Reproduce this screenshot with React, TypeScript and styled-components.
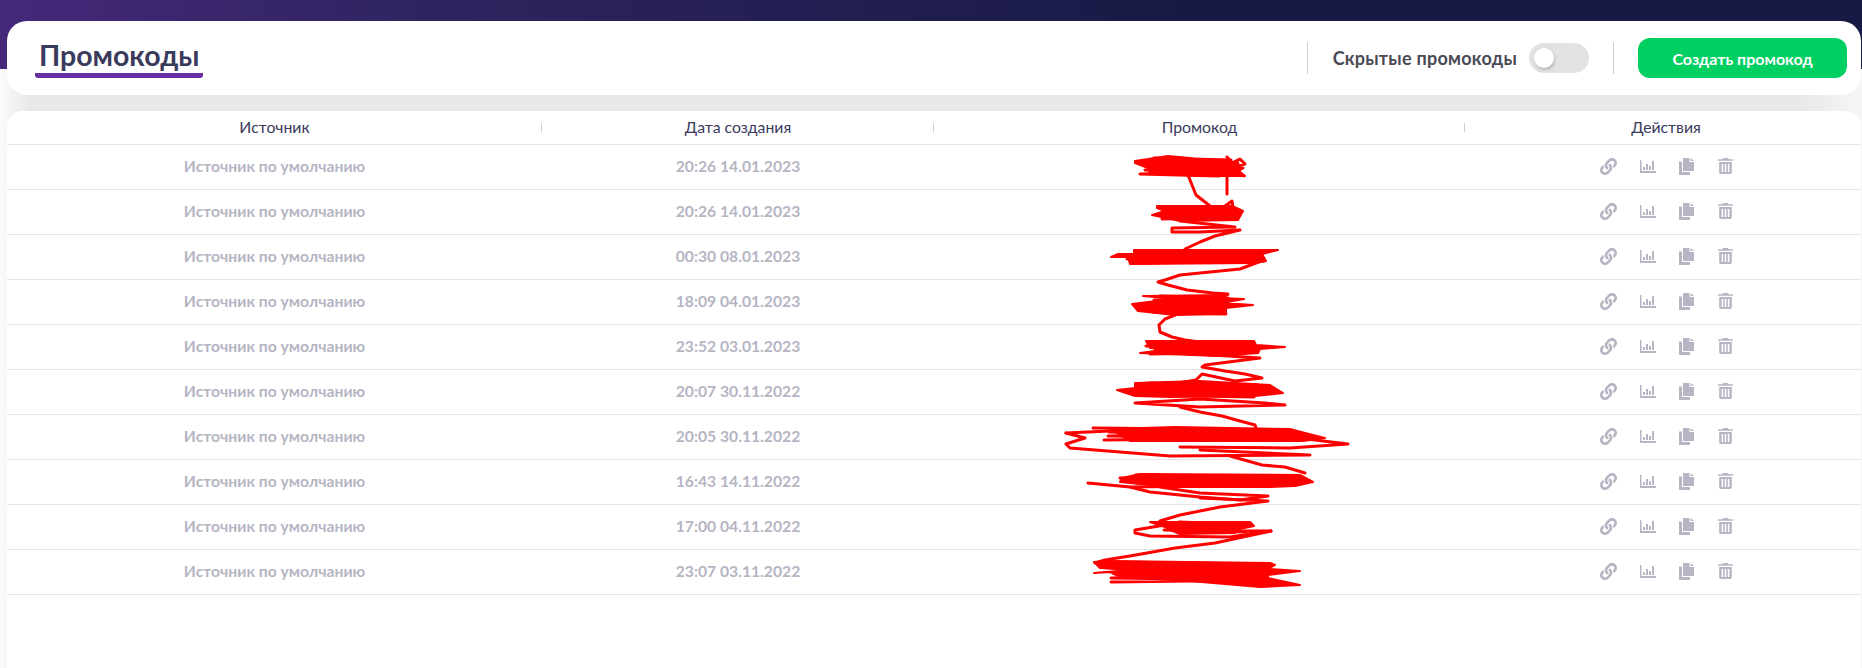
import React, { useState } from 'react';
import styled, { createGlobalStyle } from 'styled-components';
import { FaLink } from 'react-icons/fa';

const FONT = `Lato, 'Noto Sans', sans-serif`;

const GlobalStyle = createGlobalStyle`
  html, body { margin: 0; padding: 0; height: 100%; overflow: hidden; }
  * { box-sizing: border-box; }
`;

const Page = styled.div`
  position: relative;
  height: 668px;
  padding: 21px 1px 0 7px;
  overflow: hidden;
  font-family: ${FONT};
  background:
    linear-gradient(90deg, #45287a 0, #2f2460 420px, #171a44 1200px) 0 0 / 100% 69px no-repeat,
    linear-gradient(90deg, #fbfbfb 0, #e8e8e8 30px, #e8e8e8 1800px, #f6f6f6 100%);
`;

const Panel = styled.header`
  display: flex;
  align-items: center;
  height: 74px;
  padding: 0 14px 0 28px;
  background: #fff;
  border-radius: 20px;
`;

const Title = styled.h1`
  display: flex;
  flex: 1;
  margin: 0;
`;

const TitleText = styled.span`
  padding: 0 4px 2px 4px;
  border-bottom: 5px solid #6a2ea3;
  border-radius: 3px;
  font-size: 28.5px;
  line-height: 32px;
  font-weight: 700;
  color: #3a3a5c;
`;

const Separator = styled.span`
  width: 1px;
  height: 32px;
  background: #cfcfcf;
`;

const HiddenGroup = styled.div`
  display: flex;
  align-items: center;
  gap: 12px;
  padding: 0 24px 0 25px;
  font-size: 18px;
  letter-spacing: 0.25px;
  font-weight: 700;
  color: #4a4a56;
`;

const Toggle = styled.button<{ $on: boolean }>`
  position: relative;
  width: 60px;
  height: 30px;
  padding: 0;
  border: 0;
  border-radius: 15px;
  background: #e2e2e2;
  cursor: pointer;

  &::after {
    content: '';
    position: absolute;
    top: 5px;
    left: ${p => (p.$on ? '35px' : '5px')};
    width: 20px;
    height: 20px;
    border-radius: 50%;
    background: #fff;
    box-shadow: 1px 2px 3px rgba(0, 0, 0, 0.2);
  }
`;

const CreateButton = styled.button`
  width: 209px;
  height: 40px;
  margin-left: 24px;
  border: 0;
  border-radius: 12px;
  background: #00cf62;
  color: #fff;
  font-family: ${FONT};
  font-size: 16px;
  font-weight: 700;
  cursor: pointer;
`;

const TableCard = styled.section`
  margin-top: 16px;
  height: 600px;
  background: #fff;
  border-radius: 16px 16px 0 0;
`;

const columns = '535px 392px 531px 1fr';

const HeadRow = styled.div`
  display: grid;
  grid-template-columns: ${columns};
  height: 34px;
  border-bottom: 1px solid #e4e4e4;
`;

const HeadCell = styled.div<{ $divider?: boolean; $shift?: number }>`
  position: relative;
  display: flex;
  align-items: center;
  justify-content: center;
  padding: 0 0 3px ${p => p.$shift ?? 0}px;
  font-size: 15.8px;
  color: #3a3a5c;

  ${p => p.$divider && `
    &::after {
      content: '';
      position: absolute;
      right: 0;
      top: 12px;
      width: 1px;
      height: 9px;
      background: #cfcfcf;
    }
  `}
`;

const Row = styled.div`
  display: grid;
  grid-template-columns: ${columns};
  height: 45px;
  border-bottom: 1px solid #e4e4e4;
`;

const Cell = styled.div`
  display: flex;
  align-items: center;
  justify-content: center;
  padding-bottom: 3px;
  font-size: 15.7px;
  font-weight: 700;
  color: #b5b5c3;
`;

const Actions = styled.div`
  display: flex;
  align-items: center;
  justify-content: center;
  gap: 15px;
  padding: 0 0 2px 8px;
`;

const ActionIcon = styled.span`
  display: flex;
  align-items: center;
  justify-content: center;
  width: 24px;
  height: 24px;
  color: #b5b5c3;
`;

const Scribble = styled.svg`
  position: absolute;
  left: 0;
  top: 0;
  pointer-events: none;
`;

const dates = [
  '20:26 14.01.2023',
  '20:26 14.01.2023',
  '00:30 08.01.2023',
  '18:09 04.01.2023',
  '23:52 03.01.2023',
  '20:07 30.11.2022',
  '20:05 30.11.2022',
  '16:43 14.11.2022',
  '17:00 04.11.2022',
  '23:07 03.11.2022',
];

const blobs = [
  '1135,161 1168,156 1190,158 1205,161 1238,162 1240,172 1245,176 1200,176 1150,173 1148,168 1135,163',
  '1157,206 1210,206 1232,206 1243,211 1238,220 1180,221 1152,215 1165,211 1157,208',
  '1134,250 1278,250 1262,254 1266,261 1255,263 1130,264 1128,257 1111,257 1118,254 1134,254',
  '1143,296 1228,295 1220,298 1244,299 1222,303 1253,305 1226,308 1226,314 1175,315 1138,311 1132,304 1165,300 1165,298',
  '1146,341 1254,341 1256,345 1285,347 1260,349 1258,353 1218,356 1140,353 1170,349 1150,348',
  '1135,383 1200,381 1270,385 1283,393 1255,396 1170,397 1135,396 1117,390 1135,388',
  '1110,429 1175,427 1290,429 1305,433 1325,438 1303,441 1130,441',
  '1140,474 1300,475 1313,482 1295,486 1270,487 1170,487 1120,482 1122,478',
  '1150,522 1250,522 1254,526 1235,530 1235,533 1180,534 1170,530 1165,527',
  '1110,561 1270,563 1275,565 1268,569 1300,571 1268,575 1268,578 1300,585 1260,587 1190,581 1120,577 1110,572 1094,573 1130,570 1100,568 1094,562',
];

const lines = [
  '1227,157 1232,163 1240,159 1245,164 1230,167 1243,168 1235,172 1244,176',
  '1227,175 1227,194',
  '1188,175 1196,195 1210,206',
  '1225,206 1232,201 1233,208',
  '1180,221 1235,227 1172,228 1172,232 1200,232 1240,230 1215,236 1200,242 1185,249',
  '1264,260 1240,269 1200,273 1180,275 1165,280 1158,282 1168,285 1187,290 1213,293 1228,294',
  '1175,315 1165,319 1159,325 1160,332 1172,337 1185,340 1200,342',
  '1180,353 1260,358 1205,365 1202,367 1225,371 1245,374 1262,378 1235,381 1202,374 1196,380 1160,386',
  '1135,403 1200,399 1265,403 1285,405 1200,407 1135,403',
  '1180,407 1200,412 1222,416 1240,421 1255,425 1256,428',
  '1066,433 1110,431',
  '1066,433 1085,438 1066,444 1070,448 1120,452 1170,456 1310,455 1200,450',
  '1290,437 1348,444 1290,448 1180,447',
  '1230,456 1262,465 1285,467 1305,473',
  '1120,478 1140,478',
  '1088,483 1130,487 1150,492 1200,497 1240,500 1268,496 1200,493 1160,487',
  '1200,498 1268,501 1220,507 1195,512 1180,515 1160,521',
  '1165,525 1135,530 1135,533 1150,536 1230,537 1271,531 1180,531',
  '1271,531 1215,543 1175,548 1130,556 1105,560 1095,563',
];

// back and forth strokes so the ends of each patch look hand-scrawled
const scrawlBoxes = [
  [1136, 1240, 158, 176],
  [1158, 1240, 207, 220],
  [1125, 1268, 251, 263],
  [1140, 1240, 296, 314],
  [1145, 1262, 342, 355],
  [1132, 1272, 383, 397],
  [1090, 1300, 428, 441],
  [1125, 1295, 475, 487],
  [1160, 1250, 522, 533],
  [1105, 1275, 562, 582],
];

const scrawl = ([left, right, top, bottom]: number[], seed: number) => {
  const points: string[] = [];
  let r = seed * 7919 + 13;
  for (let y = top, side = 0; y <= bottom; y += 2, side++) {
    r = (r * 137 + 71) % 1009;
    const jitter = r % 22;
    points.push(`${side % 2 ? right - jitter : left + jitter},${y}`);
  }
  return points.join(' ');
};

const ChartIcon = () => (
  <svg width="16" height="13" viewBox="0 0 16 13" fill="currentColor">
    <rect x="0" y="0" width="1.5" height="13" />
    <rect x="0" y="11" width="16" height="2" />
    <rect x="3" y="7" width="2" height="3" />
    <rect x="6" y="4" width="2" height="6" />
    <rect x="9" y="6" width="2" height="4" />
    <rect x="12" y="1" width="2" height="9" />
  </svg>
);

const CopyIcon = () => (
  <svg width="15" height="17" viewBox="0 0 15 17" fill="currentColor">
    <path d="M0 3.5h3V14h8v3H0z" />
    <path d="M4 0h6.5v4H15v9H4z" />
    <path d="M11.6 0L15 3h-3.4z" />
  </svg>
);

const TrashIcon = () => (
  <svg width="15" height="16" viewBox="0 0 15 16" fill="currentColor">
    <path d="M5 0h5l.6 1.2H15v1.6H0V1.2h4.4z" />
    <path fillRule="evenodd" d="M1.2 4h12.6v10.6c0 .8-.6 1.4-1.4 1.4H2.6c-.8 0-1.4-.6-1.4-1.4zM3.6 6v8h1.6V6zm3.1 0v8h1.6V6zm3.1 0v8h1.6V6z" />
  </svg>
);

const App = () => {
  const [hidden, setHidden] = useState(false);

  return (
    <Page>
      <GlobalStyle />
      <Panel>
        <Title>
          <TitleText>Промокоды</TitleText>
        </Title>
        <Separator />
        <HiddenGroup>
          Скрытые промокоды
          <Toggle $on={hidden} onClick={() => setHidden(!hidden)} aria-label="Скрытые промокоды" />
        </HiddenGroup>
        <Separator />
        <CreateButton>Создать промокод</CreateButton>
      </Panel>

      <TableCard>
        <HeadRow>
          <HeadCell $divider>Источник</HeadCell>
          <HeadCell $divider>Дата создания</HeadCell>
          <HeadCell $divider>Промокод</HeadCell>
          <HeadCell $shift={6}>Действия</HeadCell>
        </HeadRow>
        {dates.map((date, i) => (
          <Row key={i}>
            <Cell>Источник по умолчанию</Cell>
            <Cell>{date}</Cell>
            <Cell />
            <Actions>
              <ActionIcon><FaLink size={17} /></ActionIcon>
              <ActionIcon><ChartIcon /></ActionIcon>
              <ActionIcon><CopyIcon /></ActionIcon>
              <ActionIcon><TrashIcon /></ActionIcon>
            </Actions>
          </Row>
        ))}
      </TableCard>

      <Scribble width="1862" height="668" viewBox="0 0 1862 668">
        {blobs.map((points, i) => (
          <polygon key={i} points={points} fill="#ff0000" stroke="#ff0000" strokeWidth="2" strokeLinejoin="round" />
        ))}
        {scrawlBoxes.map((box, i) => (
          <polyline key={i} points={scrawl(box, i + 1)} fill="none" stroke="#ff0000" strokeWidth="3" strokeLinecap="round" strokeLinejoin="round" />
        ))}
        {lines.map((points, i) => (
          <polyline key={i} points={points} fill="none" stroke="#ff0000" strokeWidth="3" strokeLinecap="round" strokeLinejoin="round" />
        ))}
      </Scribble>
    </Page>
  );
};

export default App;
